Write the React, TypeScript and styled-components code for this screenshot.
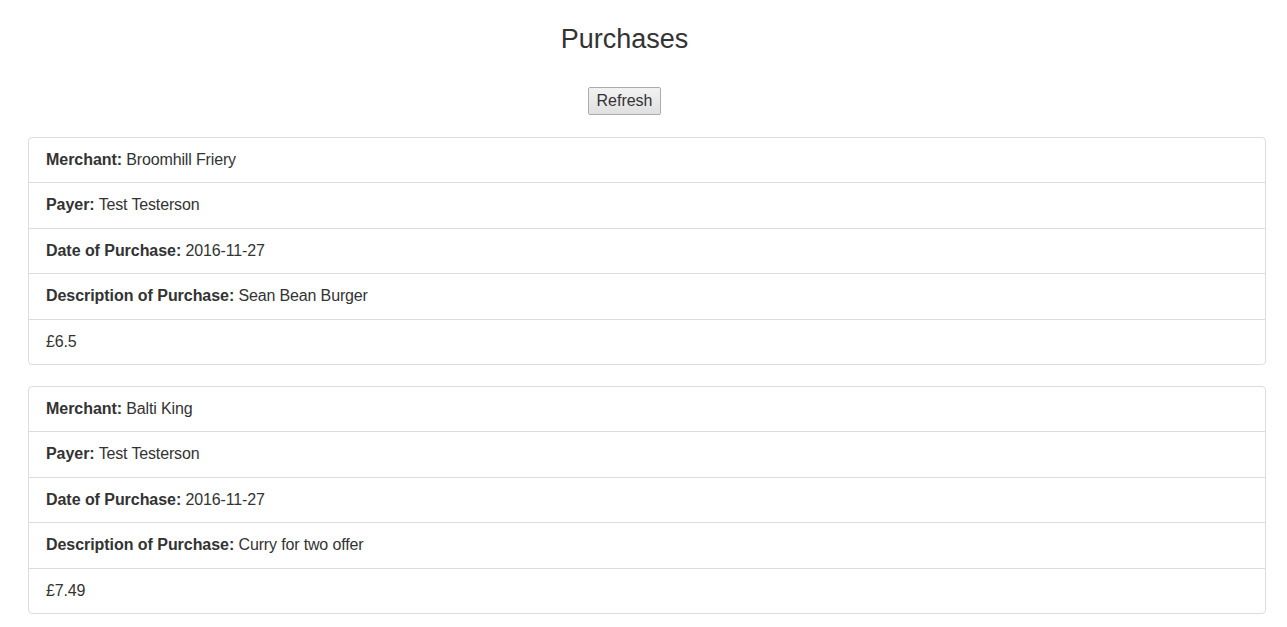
import React from "react";
import styled, { createGlobalStyle } from "styled-components";

const Global = createGlobalStyle`
  html, body { margin: 0; padding: 0; background: #fff; }
  body { font-family: "Liberation Sans", Arial, sans-serif; color: #333; font-size: 16px; }
`;

const Page = styled.div`
  width: 1249px;
  padding-top: 24px;
`;

const Header = styled.header`
  display: flex;
  flex-direction: column;
  align-items: center;
`;

const Title = styled.h1`
  margin: 0;
  font-size: 27px;
  line-height: 30px;
  font-weight: 400;
  color: #333;
`;

const RefreshButton = styled.button`
  margin-top: 33px;
  height: 28px;
  padding: 0 7px;
  font-family: "Liberation Sans", Arial, sans-serif;
  font-size: 16px;
  color: #333;
  border: 1px solid #acacac;
  border-radius: 2px;
  background: linear-gradient(#f2f2f2, #e0e0e0);
  cursor: pointer;
`;

const Lists = styled.div`
  margin: 22px 0 0 28px;
  width: 1238px;
  display: flex;
  flex-direction: column;
  gap: 21px;
`;

const ListGroup = styled.ul`
  margin: 0;
  padding: 0;
  list-style: none;
  display: flex;
  flex-direction: column;
`;

const Item = styled.li`
  padding: 10px 17px;
  line-height: 24.4px;
  font-size: 16px;
  letter-spacing: -0.15px;
  color: #333;
  border: 1px solid #ddd;
  margin-bottom: -1px;
  background: #fff;
  &:first-child { border-top-left-radius: 4px; border-top-right-radius: 4px; }
  &:last-child { margin-bottom: 0; border-bottom-left-radius: 4px; border-bottom-right-radius: 4px; }
`;

const Label = styled.strong`
  font-weight: 700;
  letter-spacing: -0.05px;
`;

type Purchase = { merchant: string; payer: string; date: string; description: string; amount: string };

const purchases: Purchase[] = [
  { merchant: "Broomhill Friery", payer: "Test Testerson", date: "2016-11-27", description: "Sean Bean Burger", amount: "£6.5" },
  { merchant: "Balti King", payer: "Test Testerson", date: "2016-11-27", description: "Curry for two offer", amount: "£7.49" },
];

export default function App() {
  return (
    <>
      <Global />
      <Page>
        <Header>
          <Title>Purchases</Title>
          <RefreshButton>Refresh</RefreshButton>
        </Header>
        <Lists>
          {purchases.map((p, i) => (
            <ListGroup key={i}>
              <Item><Label>Merchant:</Label> {p.merchant}</Item>
              <Item><Label>Payer:</Label> {p.payer}</Item>
              <Item><Label>Date of Purchase:</Label> {p.date}</Item>
              <Item><Label>Description of Purchase:</Label> {p.description}</Item>
              <Item>{p.amount}</Item>
            </ListGroup>
          ))}
        </Lists>
      </Page>
    </>
  );
}
